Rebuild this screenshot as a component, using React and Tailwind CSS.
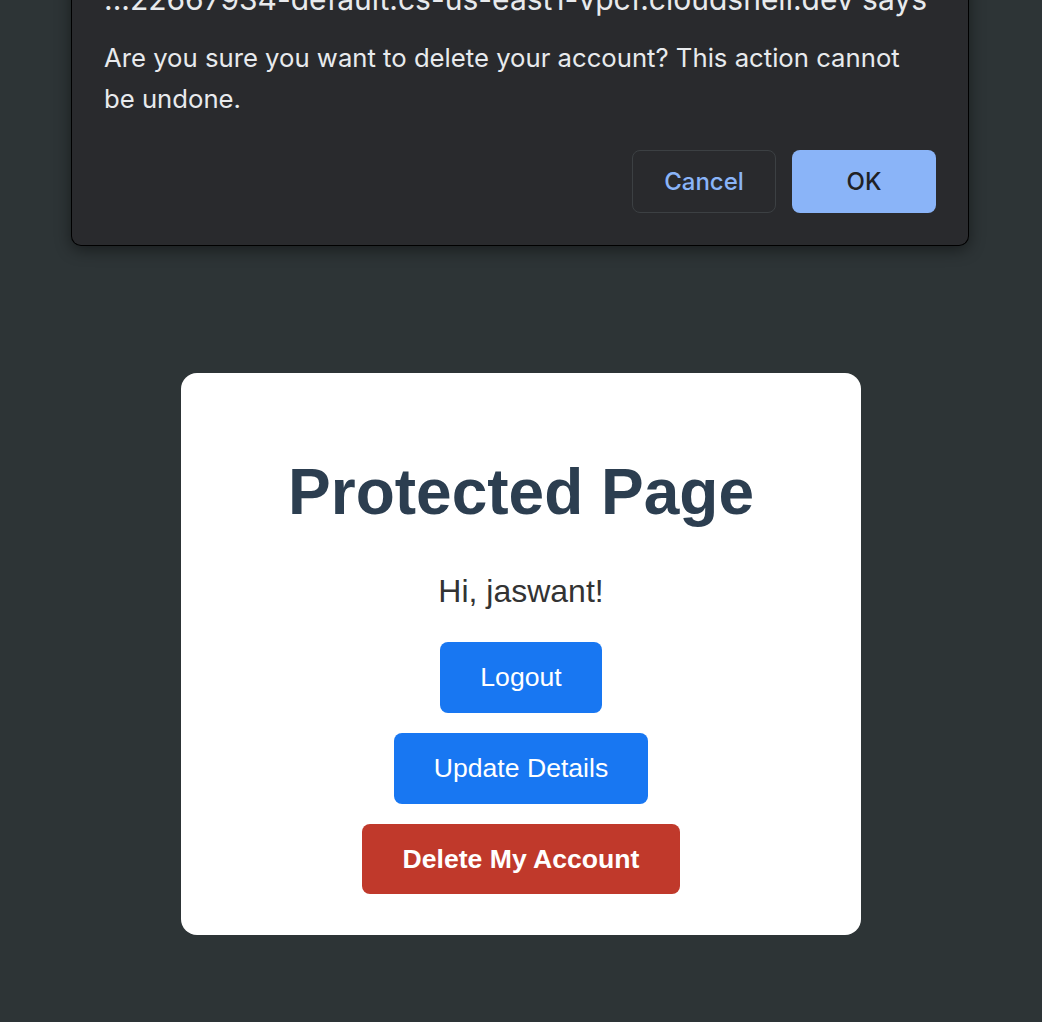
import React from "react"

const ConfirmDialog = () => {
  return (
    <div className="absolute left-[71px] top-[-40px] w-[898px] rounded-b-[10px] border-x border-b border-black bg-[#292a2d] pl-[32px] pr-[53px] pt-[19px] pb-[32px] shadow-[0_4px_16px_rgba(0,0,0,0.45)] font-['Inter',sans-serif]">
      <p className="text-[30px] leading-[40px] text-[#e8eaed] whitespace-nowrap">
        ...22667934-default.cs-us-east1-vpcf.cloudshell.dev says
      </p>
      <p className="mt-[18px] text-[25.7px] leading-[41px] text-[#e8eaed]">
        Are you sure you want to delete your account? This action cannot be
        undone.
      </p>
      <div className="mt-[31px] mr-[-21px] flex justify-end gap-[16px]">
        <button className="h-[63px] w-[144px] rounded-[8px] border border-[#3c4043] text-[24px] font-medium text-[#8ab4f8]">
          Cancel
        </button>
        <button className="h-[63px] w-[144px] rounded-[8px] bg-[#8ab4f8] text-[24px] font-medium text-[#202124]">
          OK
        </button>
      </div>
    </div>
  )
}

const App = () => {
  const username = "jaswant"

  return (
    <div className="relative min-h-screen bg-[#2d3436] font-['Liberation_Sans',Arial,sans-serif]">
      <ConfirmDialog />

      <div className="flex justify-center pt-[373px] pb-[87px]">
        <div className="w-[680px] rounded-[16px] bg-white px-[53px] pt-[83px] pb-[41px] text-center">
          <h1 className="text-[64px] font-bold leading-[1.15] text-[#2c3e50]">
            Protected Page
          </h1>
          <p className="mt-[43px] text-[32px] leading-[1.15] text-[#333333]">
            Hi, {username}!
          </p>

          <div className="mt-[33px] flex flex-col items-center gap-[20px]">
            <button className="rounded-[8px] bg-[#1877f2] px-[40px] py-[20px] text-[26.6px] leading-[1.15] text-white">
              Logout
            </button>
            <button className="rounded-[8px] bg-[#1877f2] px-[40px] py-[20px] text-[26.6px] leading-[1.15] text-white">
              Update Details
            </button>
            <button className="rounded-[8px] bg-[#c0392b] px-[41px] py-[20px] text-[26.6px] font-bold leading-[1.15] text-white">
              Delete My Account
            </button>
          </div>
        </div>
      </div>
    </div>
  )
}

export default App
